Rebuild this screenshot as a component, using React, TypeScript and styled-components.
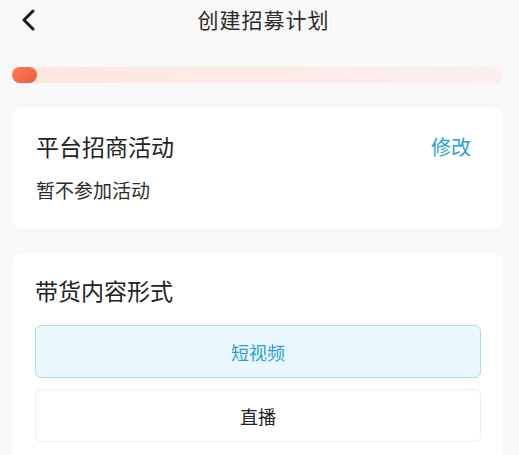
import styled, { createGlobalStyle } from "styled-components"

const GlobalStyle = createGlobalStyle`
  html, body {
    margin: 0;
    padding: 0;
    background: #f8f8f8;
  }
  body {
    font-family: "Noto Sans CJK SC", "Noto Sans", sans-serif;
    color: #222;
  }
`

const Page = styled.div`
  width: 519px;
  height: 455px;
  overflow: hidden;
  background: #f8f8f8;
  padding: 0 16px 0 12px;
  box-sizing: border-box;
`

const Header = styled.div`
  position: relative;
  height: 38px;
  display: flex;
  align-items: center;
  justify-content: center;
`

const Back = styled.button`
  position: absolute;
  left: 8px;
  top: 9px;
  border: 0;
  background: none;
  padding: 0;
  width: 20px;
  height: 24px;
  display: flex;
`

const Title = styled.h1`
  margin: 0 0 0 12px;
  font-size: 21px;
  font-weight: 400;
  color: #2b2b2b;
  letter-spacing: 1px;
`

const Progress = styled.div`
  margin-top: 29px;
  height: 16px;
  border-radius: 8px;
  background: linear-gradient(90deg, #fee5e0 0%, #fdebe8 60%, #fceeed 100%);
  display: flex;
`

const Fill = styled.div`
  height: 100%;
  border-radius: 8px;
  background: linear-gradient(135deg, #ff7b57, #f25a3c);
`

const Card = styled.section`
  background: #fff;
  border-radius: 10px;
  margin-top: ${p => p.$top}px;
  padding: ${p => p.$pad};
`

const Row = styled.div`
  display: flex;
  justify-content: space-between;
  align-items: center;
`

const CardTitle = styled.h2`
  margin: 0;
  font-size: 23px;
  font-weight: 400;
  color: #222;
  line-height: 30px;
`

const Edit = styled.span`
  font-size: 20px;
  color: #2a9fd4;
  margin-right: 32px;
`

const Sub = styled.div`
  margin-top: 16px;
  font-size: 19px;
  color: #2b2b2b;
  line-height: 26px;
`

const Options = styled.div`
  margin-top: 20px;
  display: flex;
  flex-direction: column;
  gap: 11px;
`

const Option = styled.div`
  height: 53px;
  box-sizing: border-box;
  border-radius: 6px;
  border: 1px solid ${p => (p.$active ? "#a9dcee" : "#efefef")};
  background: ${p => (p.$active ? "#eaf8fd" : "#fff")};
  color: ${p => (p.$active ? "#2a9fd4" : "#222")};
  font-size: 18px;
  display: flex;
  align-items: center;
  justify-content: center;
`

export default function App() {
  return (
    <>
      <GlobalStyle />
      <Page>
        <Header>
          <Back aria-label="返回">
            <svg width="16" height="22" viewBox="0 0 16 22">
              <path d="M13 2 L4 11 L13 20" fill="none" stroke="#1a1a1a" strokeWidth="3" strokeLinecap="round" strokeLinejoin="round" />
            </svg>
          </Back>
          <Title>创建招募计划</Title>
        </Header>
        <Progress>
          <Fill style={{ width: "5%" }} />
        </Progress>
        <Card $top={24} $pad="24px 0 26px 24px">
          <Row>
            <CardTitle>平台招商活动</CardTitle>
            <Edit>修改</Edit>
          </Row>
          <Sub>暂不参加活动</Sub>
        </Card>
        <Card $top={24} $pad="22px 22px 20px 23px">
          <CardTitle>带货内容形式</CardTitle>
          <Options>
            <Option $active>短视频</Option>
            <Option>直播</Option>
          </Options>
        </Card>
      </Page>
    </>
  )
}
